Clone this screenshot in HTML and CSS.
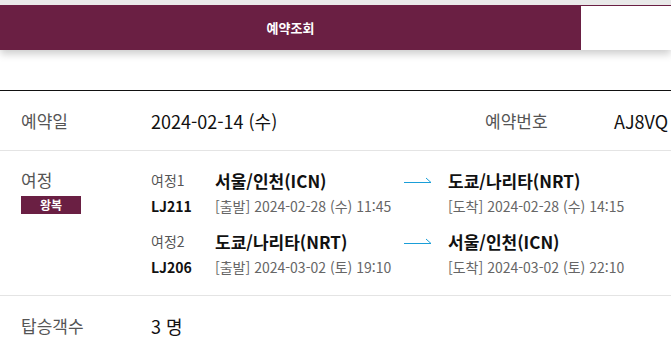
FILE: index.html
```html
<!DOCTYPE html>
<html lang="ko">
<head>
    <meta charset="UTF-8">
    <meta name="viewport" content="width=device-width, initial-scale=1.0">
    <title>예약조회</title>
    <link rel="stylesheet" href="styles.css">
</head>
<body>
    <div class="tabs">
        <div class="tab active">예약조회</div>
        <div class="tab"></div>
    </div>

    <div class="info">
        <div class="row">
            <div class="label">예약일</div>
            <div class="value date">2024-02-14 (수)</div>
            <div class="label">예약번호</div>
            <div class="value">AJ8VQ</div>
        </div>

        <div class="row trip">
            <div class="label">
                여정
                <span class="badge">왕복</span>
            </div>
            <div class="segments">
                <div class="segment">
                    <span class="seg-no">여정1</span>
                    <span class="city">서울/인천(ICN)</span>
                    <span class="arrow">
                        <svg width="27" height="8" viewBox="0 0 27 8"><path d="M0 7.5H27L22 3" fill="none" stroke="#1a9ed8" stroke-width="1"/></svg>
                    </span>
                    <span class="city">도쿄/나리타(NRT)</span>
                    <span class="flight">LJ211</span>
                    <span class="time">[출발] 2024-02-28 (수) 11:45</span>
                    <span></span>
                    <span class="time">[도착] 2024-02-28 (수) 14:15</span>
                </div>
                <div class="segment">
                    <span class="seg-no">여정2</span>
                    <span class="city">도쿄/나리타(NRT)</span>
                    <span class="arrow">
                        <svg width="27" height="8" viewBox="0 0 27 8"><path d="M0 7.5H27L22 3" fill="none" stroke="#1a9ed8" stroke-width="1"/></svg>
                    </span>
                    <span class="city">서울/인천(ICN)</span>
                    <span class="flight">LJ206</span>
                    <span class="time">[출발] 2024-03-02 (토) 19:10</span>
                    <span></span>
                    <span class="time">[도착] 2024-03-02 (토) 22:10</span>
                </div>
            </div>
        </div>

        <div class="row">
            <div class="label">탑승객수</div>
            <div class="value">3 명</div>
        </div>
    </div>
</body>
</html>
```

FILE: styles.css
```css
body {
    margin: 0;
    font-family: "Noto Sans CJK KR", "Noto Sans", sans-serif;
    color: #111;
    background: #fff;
    overflow: hidden;
}
.tabs {
    display: flex;
    padding-top: 5px;
    background: #e9e9e9;
    box-shadow: 0 4px 8px rgba(0,0,0,0.2);
}
.tab {
    flex: 1;
    height: 44px;
    background: #fff;
    border-top: 1px solid #6a1f43;
}
.tab.active {
    flex: 0 0 581px;
    height: 45px;
    border-top: none;
    background: #6a1f43;
    color: #fff;
    font-size: 13px;
    font-weight: bold;
    display: flex;
    align-items: center;
    justify-content: center;
}
.info {
    margin-top: 40px;
    border-top: 1px solid #111;
    white-space: nowrap;
}
.row {
    display: flex;
    align-items: center;
    height: 59px;
    padding-left: 21px;
    border-bottom: 1px solid #e4e4e4;
}
.label {
    flex: 0 0 130px;
    font-size: 17px;
    color: #555;
}
.value {
    font-size: 18px;
    color: #111;
}
.value.date {
    flex: 0 0 334px;
}
.label + .value + .label {
    flex: 0 0 129px;
}
.row.trip {
    height: auto;
    align-items: flex-start;
    padding-top: 16px;
    padding-bottom: 15px;
}
.row.trip .label {
    display: flex;
    flex-direction: column;
    line-height: 26px;
}
.badge {
    display: block;
    width: 60px;
    height: 18px;
    margin-top: 3px;
    background: #6a1f43;
    color: #fff;
    font-size: 12px;
    font-weight: bold;
    line-height: 18px;
    text-align: center;
}
.segments {
    display: flex;
    flex-direction: column;
    gap: 9px;
}
.segment {
    display: grid;
    grid-template-columns: 64px 189px 44px auto;
    grid-auto-rows: 26px;
    align-items: center;
}
.seg-no {
    font-size: 14px;
    color: #555;
}
.city {
    font-size: 17px;
    font-weight: bold;
    color: #111;
}
.arrow {
    display: flex;
    align-items: center;
    padding-bottom: 2px;
}
.flight {
    font-size: 14px;
    font-weight: bold;
    color: #111;
}
.time {
    font-size: 14px;
    color: #666;
}
```
